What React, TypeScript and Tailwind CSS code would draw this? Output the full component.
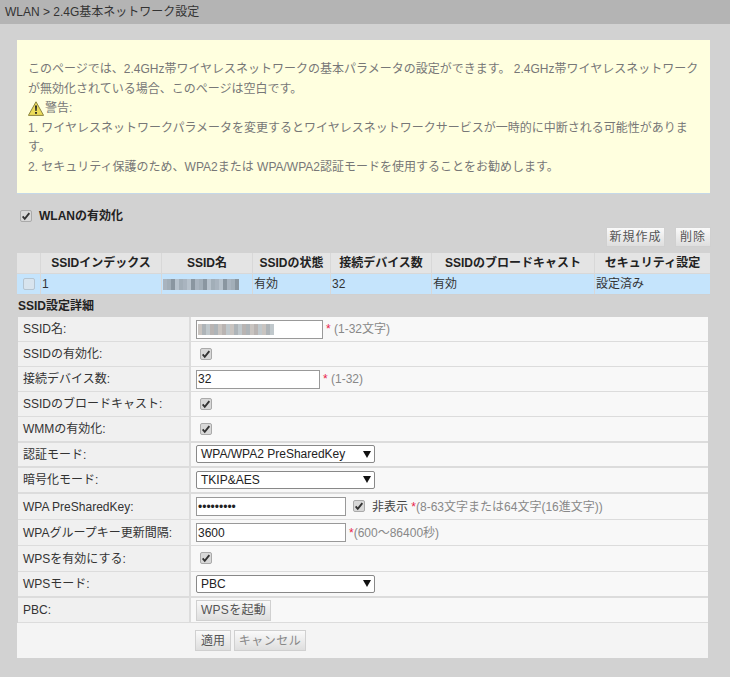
import type { ReactNode } from 'react';

const font = { fontFamily: '"Liberation Sans", "Noto Sans CJK JP", sans-serif' };

const mosaicDark = ['#a9b4bf', '#8f9aa5', '#b7c2cc', '#7f8b96', '#a2aeb8', '#c4d0da', '#8a96a0', '#b0bcc6'];
const mosaicLight = ['#c9c4c0', '#e0dcd8', '#b9b4b2', '#d8dde0', '#aeb4b8', '#e6e4e2', '#c0c8cc', '#d2ccc8'];

const Mosaic = ({ colors, count }: { colors: string[]; count: number }) => (
  <span className="flex h-[11px]">
    {Array.from({ length: count }).map((_, i) => (
      <span key={i} className="w-[4px] h-full" style={{ background: colors[(i * 3 + (i % 2)) % colors.length] }} />
    ))}
  </span>
);

const Check = ({ className = '' }: { className?: string }) => (
  <span className={`inline-flex w-[12px] h-[12px] items-center justify-center rounded-[2px] border border-[#aaa] bg-[#d8d8d8] ${className}`}>
    <svg viewBox="0 0 12 12" className="w-[10px] h-[10px]">
      <path d="M2 6.5 L4.5 9.5 L10 2.5" fill="none" stroke="#333" strokeWidth="2.2" />
    </svg>
  </span>
);

const Button = ({ children, className = '' }: { children: ReactNode; className?: string }) => (
  <button className={`border border-[#d0d0d0] bg-gradient-to-b from-[#fafafa] to-[#dedede] text-[12px] text-[#555] flex items-center justify-center ${className}`}>
    {children}
  </button>
);

const Select = ({ value }: { value: string }) => (
  <div className="w-[179px] h-[18px] -mt-[1px] border border-[#888] rounded-[2px] bg-white flex items-center justify-between pl-[4px] pr-[3px] text-[12px] text-[#222]">
    <span>{value}</span>
    <svg viewBox="0 0 8 7" className="w-[8px] h-[7px]"><path d="M0 0 H8 L4 7 Z" fill="#111" /></svg>
  </div>
);

const Row = ({ label, h, thick, children }: { label: string; h: string; thick?: boolean; children: ReactNode }) => (
  <div className={`flex ${h} ${thick ? 'border-b-2' : 'border-b'} border-[#dcdcdc]`}>
    <div className="w-[173px] bg-[#f0f0f0] border-r-2 border-[#dcdcdc] pl-[5px] flex items-center text-[12px] text-[#333]">
      {label}
    </div>
    <div className="flex-1 bg-[#f8f8f8] pl-[5px] flex items-center text-[12px] text-[#888]">{children}</div>
  </div>
);

const Star = () => <span className="text-[#e8224a]">*</span>;

const headCols = [
  { w: 'w-[24px]', t: '' },
  { w: 'w-[121px]', t: 'SSIDインデックス' },
  { w: 'w-[91px]', t: 'SSID名' },
  { w: 'w-[78px]', t: 'SSIDの状態' },
  { w: 'w-[101px]', t: '接続デバイス数' },
  { w: 'w-[163px]', t: 'SSIDのブロードキャスト' },
  { w: 'flex-1', t: 'セキュリティ設定' },
];

export default function App() {
  return (
    <div className="w-[730px] h-[677px] overflow-hidden bg-[#d2d2d2]" style={font}>
      <div className="h-[24px] bg-[#b4b4b4] pl-[5px] flex items-center text-[12px] text-[#333]">
        WLAN &gt; 2.4G基本ネットワーク設定
      </div>

      <div className="pl-[17px] pr-[20px] pt-[16px]">
        <div className="h-[154px] bg-[#ffffdf] border-b border-[#c5d8e8] pl-[11px] pt-[20px] text-[12px] leading-[19.6px] text-[#777]">
          <p>このページでは、2.4GHz帯ワイヤレスネットワークの基本パラメータの設定ができます。 2.4GHz帯ワイヤレスネットワーク</p>
          <p>が無効化されている場合、このページは空白です。</p>
          <p className="flex items-center">
            <svg viewBox="0 0 16 15" className="w-[16px] h-[15px]">
              <path d="M8 .8 L15.6 14.4 H.4 Z" fill="#ecdc5a" stroke="#8c8440" strokeWidth="1" strokeLinejoin="round" />
              <path d="M7 4.5 H9 L8.6 10 H7.4 Z" fill="#222" />
              <rect x="7.1" y="11" width="1.8" height="1.8" fill="#222" />
            </svg>
            <span className="ml-[1px]">警告:</span>
          </p>
          <p>1. ワイヤレスネットワークパラメータを変更するとワイヤレスネットワークサービスが一時的に中断される可能性がありま</p>
          <p>す。</p>
          <p>2. セキュリティ保護のため、WPA2または WPA/WPA2認証モードを使用することをお勧めします。</p>
        </div>

        <label className="flex items-center h-[16px] mt-[14px] ml-[3px] text-[12px] font-bold text-[#222]">
          <Check />
          <span className="ml-[7px]">WLANの有効化</span>
        </label>

        <div className="flex justify-end gap-[10px] mt-[3px] h-[20px] -mr-[1px]">
          <Button className="w-[59px] h-[20px] tracking-[1px]">新規作成</Button>
          <Button className="w-[36px] h-[20px] tracking-[1px]">削除</Button>
        </div>

        <div className="mt-[6px]">
          <div className="flex h-[21px] bg-[#e4e4e4] border-b border-[#d8d8d8] text-[12px] font-bold text-[#222]">
            {headCols.map((c, i) => (
              <div key={i} className={`${c.w} border-r border-[#d8d8d8] flex items-center justify-center whitespace-nowrap last:border-r-0`}>
                {c.t}
              </div>
            ))}
          </div>
          <div className="flex h-[21px] bg-[#c5e4fc] border-b border-[#d0d0d0] text-[12px] text-[#333]">
            <div className="w-[24px] border-r border-[#d8d8d8] flex items-center justify-center">
              <span className="w-[12px] h-[12px] rounded-[2px] border border-[#b5c4d0] bg-[#d8e4ee]" />
            </div>
            <div className="w-[121px] border-r border-[#d8d8d8] flex items-center pl-[1px]">1</div>
            <div className="w-[91px] border-r border-[#d8d8d8] flex items-center pl-[1px]"><Mosaic colors={mosaicDark} count={19} /></div>
            <div className="w-[78px] border-r border-[#d8d8d8] flex items-center pl-[1px]">有効</div>
            <div className="w-[101px] border-r border-[#d8d8d8] flex items-center pl-[1px]">32</div>
            <div className="w-[163px] border-r border-[#d8d8d8] flex items-center pl-[1px]">有効</div>
            <div className="flex-1 flex items-center pl-[1px]">設定済み</div>
          </div>
        </div>

        <div className="h-[22px] flex items-center pl-[1px] text-[12px] font-bold text-[#222]">SSID設定詳細</div>

        <div className="ml-[1px] mr-[2px]">
          <Row label="SSID名:" h="h-[25px]">
            <div className="w-[127px] h-[19px] border border-[#999] bg-white flex items-center pl-[1px]"><Mosaic colors={mosaicLight} count={19} /></div>
            <span className="ml-[3px]"><Star /> (1-32文字)</span>
          </Row>
          <Row label="SSIDの有効化:" h="h-[25px]"><Check className="ml-[4px] -mt-[1px]" /></Row>
          <Row label="接続デバイス数:" h="h-[25px]">
            <input readOnly value="32" className="w-[124px] h-[19px] border border-[#999] bg-white pl-[1px] text-[12px] text-[#222] outline-none" />
            <span className="ml-[3px]"><Star /> (1-32)</span>
          </Row>
          <Row label="SSIDのブロードキャスト:" h="h-[25px]"><Check className="ml-[4px] -mt-[1px]" /></Row>
          <Row label="WMMの有効化:" h="h-[26px]" thick><Check className="ml-[4px] -mt-[1px]" /></Row>
          <Row label="認証モード:" h="h-[25px]" thick><Select value="WPA/WPA2 PreSharedKey" /></Row>
          <Row label="暗号化モード:" h="h-[26px]" thick><Select value="TKIP&AES" /></Row>
          <Row label="WPA PreSharedKey:" h="h-[26px]">
            <input readOnly type="password" value="123456789" className="w-[150px] h-[19px] border border-[#999] bg-white pl-[1px] text-[12px] text-[#222] outline-none" />
            <Check className="ml-[7px] -mt-[2px]" />
            <span className="ml-[7px]"><span className="text-[#444]">非表示</span> <Star />(8-63文字または64文字(16進文字))</span>
          </Row>
          <Row label="WPAグループキー更新間隔:" h="h-[26px]">
            <input readOnly value="3600" className="w-[150px] h-[19px] border border-[#999] bg-white pl-[1px] text-[12px] text-[#222] outline-none" />
            <span className="ml-[3px]"><Star />(600～86400秒)</span>
          </Row>
          <Row label="WPSを有効にする:" h="h-[26px]"><Check className="ml-[4px] -mt-[1px]" /></Row>
          <Row label="WPSモード:" h="h-[26px]" thick><Select value="PBC" /></Row>
          <Row label="PBC:" h="h-[25px]">
            <Button className="w-[75px] h-[21px] text-[#333] tracking-[0.3px]">WPSを起動</Button>
          </Row>
        </div>

        <div className="h-[35px] mr-[2px] bg-[#f4f4f4] flex items-center pl-[178px] gap-[3px]">
          <Button className="w-[36px] h-[21px] text-[#333]">適用</Button>
          <Button className="w-[72px] h-[21px] text-[#888] tracking-[0.5px]">キャンセル</Button>
        </div>
      </div>
    </div>
  );
}
